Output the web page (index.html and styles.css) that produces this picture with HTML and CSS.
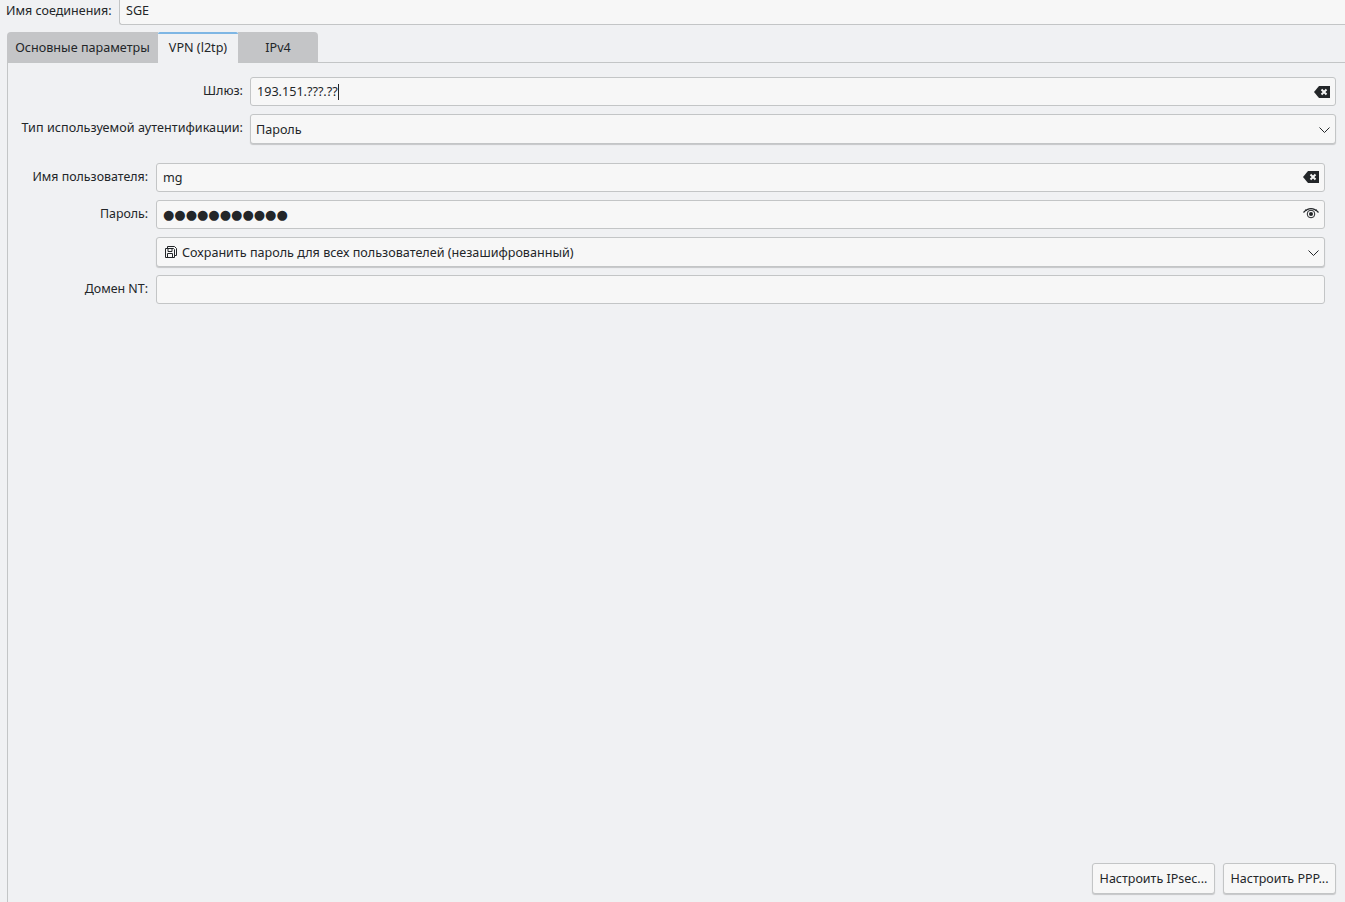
FILE: index.html
```html
<!DOCTYPE html>
<html lang="ru">
<head>
<meta charset="utf-8">
<title>VPN</title>
<link rel="stylesheet" href="styles.css">
</head>
<body>
<div class="app">
  <header class="name-row">
    <label class="name-label">Имя соединения:</label>
    <div class="name-field">SGE</div>
  </header>
  <nav class="tabs">
    <div class="tab tab-first">Основные параметры</div>
    <div class="tab tab-active">VPN (l2tp)</div>
    <div class="tab tab-last">IPv4</div>
  </nav>
  <main class="pane">
    <section class="form form-outer">
      <label class="label">Шлюз:</label>
      <div class="field"><span class="value">193.151.???.??</span><span class="caret"></span>
        <svg class="icon-clear" width="16" height="12" viewBox="0 0 16 12"><path fill="#232629" d="M5 0h11v12H5L0 6z"/><path stroke="#f5f5f5" stroke-width="2" d="M7.500 3.500l5 5M12.500 3.500l-5 5"/></svg>
      </div>
      <label class="label label-combo">Тип используемой аутентификации:</label>
      <div class="combo"><span class="combo-text combo-text-plain">Пароль</span>
        <svg class="chev" width="11" height="6" viewBox="0 0 11 6"><path fill="none" stroke="#232629" d="M.5.5l5 5 5-5"/></svg>
      </div>
    </section>
    <section class="form form-inner">
      <label class="label label-small">Имя пользователя:</label>
      <div class="field"><span class="value">mg</span>
        <svg class="icon-clear icon-up" width="16" height="12" viewBox="0 0 16 12"><path fill="#232629" d="M5 0h11v12H5L0 6z"/><path stroke="#f5f5f5" stroke-width="2" d="M7.500 3.500l5 5M12.500 3.500l-5 5"/></svg>
      </div>
      <label class="label label-small">Пароль:</label>
      <div class="field"><span class="dots">●●●●●●●●●●●</span>
        <svg class="icon-eye" width="16" height="11" viewBox="0 0 16 11"><path fill="none" stroke="#232629" stroke-width="1.200" d="M.5 4.500C3 1.800 5.500.7 8 .7s5 1.100 7.500 3.800"/><path stroke="#232629" d="M2.500 1.500l1 1.500M13.500 1.500l-1 1.500"/><circle cx="8" cy="6" r="3.800" fill="none" stroke="#232629"/><circle cx="8" cy="6" r="2" fill="#232629"/></svg>
      </div>
      <span class="spacer"></span>
      <div class="combo"><svg class="floppy" width="12" height="12" viewBox="0 0 12 12"><path fill="none" stroke="#232629" d="M2.500.5h7l2 2v7h-2M2.500.5v2M.500 2.500h8l1 1v8h-9zM3 2.500v3h4v-3M2.500 11.500v-4h5v4"/></svg><span class="combo-text">Сохранить пароль для всех пользователей (незашифрованный)</span>
        <svg class="chev" width="11" height="6" viewBox="0 0 11 6"><path fill="none" stroke="#232629" d="M.5.5l5 5 5-5"/></svg>
      </div>
      <label class="label label-small">Домен NT:</label>
      <div class="field"></div>
    </section>
    <footer class="actions">
      <button class="btn btn-ipsec">Настроить IPsec...</button>
      <button class="btn btn-ppp">Настроить PPP...</button>
    </footer>
  </main>
</div>
</body>
</html>
```
FILE: styles.css
```css
html, body { margin: 0; height: 100%; }
body {
  background: #f0f1f3;
  color: #232629;
  font-family: "Noto Sans", sans-serif;
  font-size: 12.6px;
  overflow: hidden;
}
.app { display: flex; flex-direction: column; height: 902px; width: 1345px; }

.name-row { display: flex; height: 25px; gap: 7px; padding-left: 6px; flex: none; }
.name-label { font-size: 12.5px; line-height: 21px; width: 106px; white-space: nowrap; }
.name-field {
  flex: 1;
  background: #f7f7f7;
  border: 1px solid #c3c5c6;
  border-width: 0 0 1px 1px;
  border-bottom-left-radius: 3px;
  padding-left: 6px;
  line-height: 22px;
}

.tabs { display: flex; margin: 7px 0 0 7px; height: 30px; flex: none; }
.tab { background: #c4c5c7; line-height: 31px; text-align: center; height: 30px; }
.tab-first { width: 151px; border-top-left-radius: 4px; }
.tab-active {
  width: 80px;
  background: #f0f1f3;
  border-top: 2px solid #7eb6e4;
  line-height: 27px;
  border-top-left-radius: 2px;
  border-top-right-radius: 2px;
  height: 31px;
  box-sizing: border-box;
  position: relative;
  z-index: 1;
}
.tab-last { width: 80px; border-top-right-radius: 4px; }

.pane {
  flex: 1;
  display: flex;
  flex-direction: column;
  margin-left: 7px;
  border-left: 1px solid #c3c5c6;
  border-top: 1px solid #c3c5c6;
  min-height: 0;
}

.form { display: grid; align-items: center; }
.form-outer {
  grid-template-columns: 235px 1086px;
  column-gap: 7px;
  row-gap: 8px;
  grid-template-rows: 29px 30px;
  margin-top: 14px;
}
.form-inner {
  grid-template-columns: 140px 1169px;
  column-gap: 8px;
  grid-template-rows: 29px 29px 30px 29px;
  row-gap: 8px;
  margin-top: 19px;
}
.label { text-align: right; white-space: nowrap; position: relative; top: -1px; }
.label-combo { top: -2px; letter-spacing: .03px; }
.label-small { font-size: 12.4px; }
.spacer { display: block; }

.field, .combo {
  display: flex;
  align-items: center;
  box-sizing: border-box;
  height: 100%;
  background: #f7f7f7;
  border: 1px solid #c3c5c6;
  border-radius: 3px;
  padding: 0 5px 0 6px;
}
.combo {
  box-shadow: 0 1px 1px rgba(0, 0, 0, .18);
  padding-right: 5px;
}
.value { white-space: nowrap; }
.caret { width: 1px; height: 16px; background: #232629; margin-left: 0; }
.dots { font-size: 13px; letter-spacing: 0; font-family: "DejaVu Sans", sans-serif; }
.icon-clear, .icon-eye, .chev { margin-left: auto; flex: none; }
.icon-up, .icon-eye { position: relative; top: -1px; }
.chev { position: relative; top: 1px; }
.combo-text { white-space: nowrap; }
.combo-text-plain { margin-left: -1px; }
.floppy { flex: none; margin: 0 5px 0 2px; }

.actions { margin-top: auto; display: flex; justify-content: flex-end; gap: 8px; padding: 0 9px 8px 0; }
.btn {
  height: 31px;
  background: #f7f7f7;
  border: 1px solid #c3c5c6;
  border-radius: 3px;
  box-shadow: 0 1px 1px rgba(0, 0, 0, .18);
  color: #232629;
  font: inherit;
  font-size: 12.5px;
  padding: 0;
  white-space: nowrap;
}
.btn-ipsec { width: 123px; }
.btn-ppp { width: 113px; }
```
